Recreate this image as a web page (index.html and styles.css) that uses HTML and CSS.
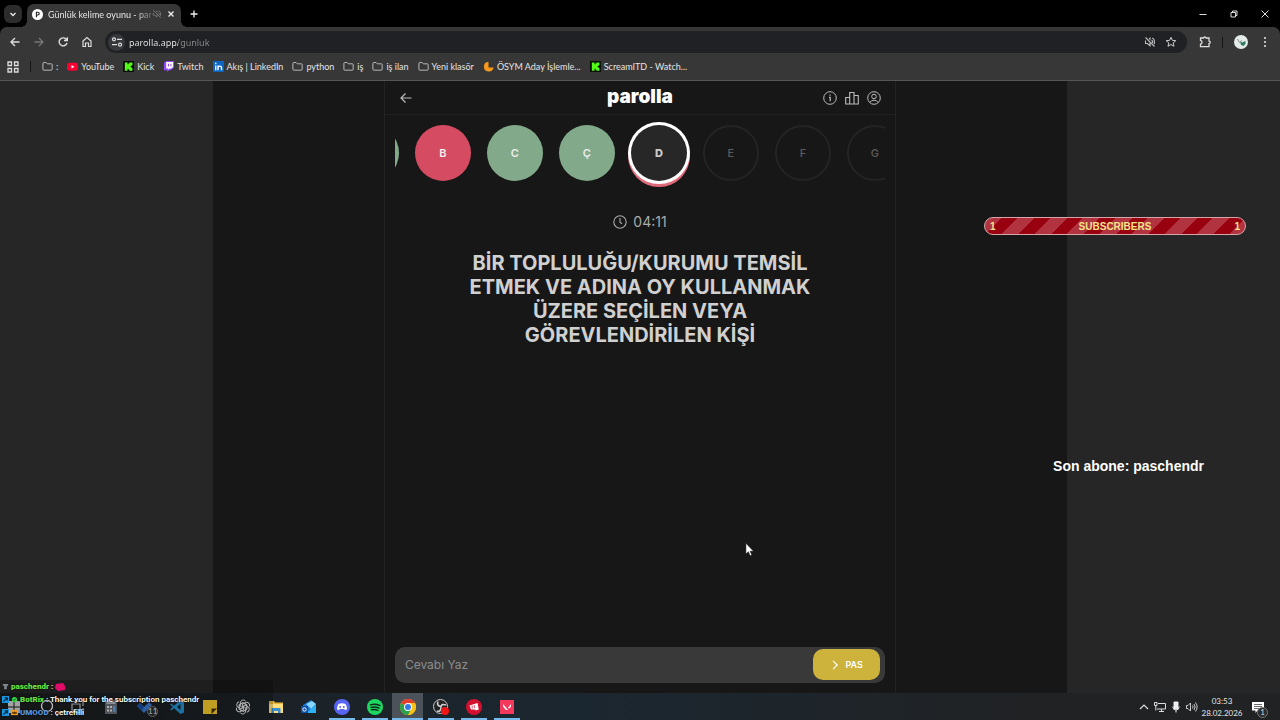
FILE: index.html
```html
<!DOCTYPE html>
<html lang="tr">
<head>
  <meta charset="UTF-8">
  <meta name="viewport" content="width=device-width, initial-scale=1.0">
  <title>Günlük kelime oyunu - parolla</title>
  <link rel="stylesheet" href="styles.css">
</head>
<body>
  <!-- Icons that are used more than once -->
  <svg class="defs" aria-hidden="true">
    <symbol id="folder" viewBox="0 0 12 12"><path d="M1 2.5q0-.8.8-.8h2.7l1.3 1.4h4.5q.8 0 .8.8v5.3q0 .8-.8.8H1.8q-.8 0-.8-.8z" fill="none" stroke="#c4c4c4"/></symbol>
    <symbol id="kick" viewBox="0 0 12 12"><path d="M0 0h12v12H0z" fill="#0b0e0b"/><path d="M2 1.5h3v2h1v-1h1v-1h3.300v3h-1v1h-1v1h1v1h1v3H7v-1H6v-1H5v2H2z" fill="#53fc18"/></symbol>
    <symbol id="muted" viewBox="0 0 16 16"><path d="M2 2l12 12M2 6v4h2.500L8 13V9M8 5V3L6.600 4.200M10 5.500q2 1 1.500 4M11 2.800q4 2 2.600 8" fill="none" stroke="currentColor" stroke-width="1.500"/></symbol>
  </svg>

  <!-- Browser window -->
  <header class="browser">
    <div class="tab-strip">
      <button class="tab-search" aria-label="Sekmelerde ara"><svg viewBox="0 0 10 10"><path d="M2.500 4L5 6.500 7.500 4" fill="none" stroke="#e8e8e8" stroke-width="1.400"/></svg></button>
      <div class="tab">
        <svg class="favicon" viewBox="0 0 12 12"><circle cx="6" cy="6" r="6" fill="#fff"/><path d="M4.800 9V3.500h1.600a1.500 1.500 0 0 1 0 3H4.800" fill="none" stroke="#222" stroke-width="1.200"/></svg>
        <span class="tab-title">Günlük kelime oyunu - par</span>
        <svg class="tab-muted" viewBox="0 0 16 16"><use href="#muted"/></svg>
        <button class="tab-close" aria-label="Kapat"><svg viewBox="0 0 10 10"><path d="M2.500 2.500l5 5m0-5l-5 5" stroke="#eee" stroke-width="1.300"/></svg></button>
      </div>
      <button class="new-tab" aria-label="Yeni sekme"><svg viewBox="0 0 10 10"><path d="M5 1.500v7M1.500 5h7" stroke="#eee" stroke-width="1.300"/></svg></button>
      <div class="window-buttons">
        <button aria-label="Küçült"><svg viewBox="0 0 10 10"><path d="M1.500 5.500h7" stroke="#ddd"/></svg></button>
        <button aria-label="Geri yükle"><svg viewBox="0 0 10 10"><path d="M2 3.500h4.500V8H2zM3.500 3.500V2H8v4.500H6.500" fill="none" stroke="#ddd"/></svg></button>
        <button aria-label="Pencereyi kapat"><svg viewBox="0 0 10 10"><path d="M1.500 1.500l7 7m0-7l-7 7" stroke="#ddd"/></svg></button>
      </div>
    </div>

    <div class="toolbar">
      <button aria-label="Geri"><svg viewBox="0 0 12 12"><path d="M10.500 6h-8M6 2L2 6l4 4" fill="none" stroke="#ddd" stroke-width="1.400"/></svg></button>
      <button aria-label="İleri"><svg viewBox="0 0 12 12"><path d="M1.500 6h8M6 2l4 4-4 4" fill="none" stroke="#777" stroke-width="1.300"/></svg></button>
      <button aria-label="Yenile"><svg viewBox="0 0 12 12"><path d="M10 7a4 4 0 1 1-1-4l1 1M10.300 1.200v3.300H7" fill="none" stroke="#ddd" stroke-width="1.400"/></svg></button>
      <button aria-label="Ana sayfa"><svg viewBox="0 0 12 12"><path d="M2 5l4-3.500L10 5v5.500H7.500V7h-3v3.500H2z" fill="none" stroke="#ddd" stroke-width="1.200"/></svg></button>
      <div class="address">
        <button class="site-info" aria-label="Site bilgileri"><svg viewBox="0 0 12 12"><path d="M6 3.300h5M1 8.700h5" stroke="#ddd" stroke-width="1.200"/><circle cx="3" cy="3.300" r="1.500" fill="none" stroke="#ddd" stroke-width="1.200"/><circle cx="9" cy="8.700" r="1.500" fill="none" stroke="#ddd" stroke-width="1.200"/></svg></button>
        <input class="url" type="text" aria-label="Adres" value="parolla.app/gunluk">
        <button aria-label="Sesi kapalı"><svg viewBox="0 0 16 16"><use href="#muted"/></svg></button>
        <button aria-label="Yer işareti ekle"><svg viewBox="0 0 12 12"><path d="M6 1.300l1.400 3.100 3.400.3-2.600 2.200.8 3.400L6 8.500l-3 1.800.8-3.400L1.200 4.700l3.400-.3z" fill="none" stroke="#ccc"/></svg></button>
      </div>
      <div class="toolbar-end">
        <button aria-label="Uzantılar"><svg viewBox="0 0 12 12"><path d="M1.500 2h2.800q.2-1 1.400-1t1.400 1h2.900v3q1.300.2 1.300 1.300T10 7.600v3H1.500V8.200q1.500-.3 1.500-1.900T1.500 4.400z" fill="none" stroke="#ddd" stroke-width="1.300"/></svg></button>
        <span class="divider"></span>
        <button class="profile" aria-label="Profil"><svg viewBox="0 0 14 14"><circle cx="7" cy="7" r="7" fill="#e4ece9"/><path d="M6 6.500l2 1 3.500-1.500V9L9.500 11 7 10z" fill="#2e7d62"/><path d="M3.500 4l2 3.500L8 5.500" fill="none" stroke="#888"/></svg></button>
        <button aria-label="Menü"><svg viewBox="0 0 12 12"><g fill="#ddd"><circle cx="6" cy="2" r="1.100"/><circle cx="6" cy="6" r="1.100"/><circle cx="6" cy="10" r="1.100"/></g></svg></button>
      </div>
    </div>

    <nav class="bookmarks">
      <button class="apps" aria-label="Uygulamalar"><svg viewBox="0 0 12 12"><path d="M1 1h3.500v3.500H1zM7.500 1H11v3.500H7.500zM1 7.500h3.500V11H1zM7.500 7.500H11V11H7.500z" fill="none" stroke="#ddd" stroke-width="1.300"/></svg></button>
      <span class="divider"></span>
      <a href="#"><svg viewBox="0 0 12 12"><use href="#folder"/></svg>:</a>
      <a href="#"><svg viewBox="0 0 12 12"><rect y="2" width="12" height="8.500" rx="2.500" fill="#f03"/><path d="M4.800 4.300v4l3.400-2z" fill="#fff"/></svg>YouTube</a>
      <a href="#"><svg viewBox="0 0 12 12"><use href="#kick"/></svg>Kick</a>
      <a href="#"><svg viewBox="0 0 12 12"><path d="M3 0h9v7L8.500 10H6.500l-2 2v-2H1V2.500z" fill="#9146ff"/><path d="M3.500 1.200H11v5.300L9.200 8.200H7L5.500 9.500V8.200h-2z" fill="#fff"/><path d="M6 3v3M8.700 3v3" stroke="#9146ff" stroke-width="1.100"/></svg>Twitch</a>
      <a href="#"><svg viewBox="0 0 12 12"><rect width="12" height="12" rx="1" fill="#0a66c2"/><path d="M3 5v5M5.500 10V5m0 2.500Q5.700 5.600 7.500 5.600T9.300 7.500V10M3 2v1.500" fill="none" stroke="#fff" stroke-width="1.500"/></svg>Akış | LinkedIn</a>
      <a href="#"><svg viewBox="0 0 12 12"><use href="#folder"/></svg>python</a>
      <a href="#"><svg viewBox="0 0 12 12"><use href="#folder"/></svg>iş</a>
      <a href="#"><svg viewBox="0 0 12 12"><use href="#folder"/></svg>iş ilan</a>
      <a href="#"><svg viewBox="0 0 12 12"><use href="#folder"/></svg>Yeni klasör</a>
      <a href="#"><svg viewBox="0 0 12 12"><path d="M6 .8A5.300 5.300 0 1 0 11.500 7H6z" fill="#f7981d"/></svg>ÖSYM Aday İşlemle...</a>
      <a href="#"><svg viewBox="0 0 12 12"><use href="#kick"/></svg>ScreamITD - Watch...</a>
    </nav>
  </header>

  <!-- Game page -->
  <main class="page">
    <div class="page-center">
      <section class="game">
        <div class="game-header">
          <a href="#" aria-label="Geri dön"><svg viewBox="0 0 14 14"><path d="M12.500 7H2M6.500 2.500L2 7l4.500 4.500" fill="none" stroke="#bbb" stroke-width="1.200"/></svg></a>
          <h1>parolla</h1>
          <div class="game-actions">
            <button aria-label="Bilgi"><svg viewBox="0 0 14 14"><circle cx="7" cy="7" r="6.300" fill="none" stroke="#bbb"/><path d="M6 6.300h1.200v3.900M7 3.600v1.200" fill="none" stroke="#bbb" stroke-width="1.200"/></svg></button>
            <button aria-label="İstatistikler"><svg viewBox="0 0 14 14"><path d="M.7 6.500h4V13h-4zM4.700 1.500h4.300V13H4.700zM9 4.500h4.300V13H9z" fill="none" stroke="#bbb" stroke-width="1.100"/></svg></button>
            <button aria-label="Hesap"><svg viewBox="0 0 14 14"><g fill="none" stroke="#bbb"><circle cx="7" cy="7" r="6.300"/><circle cx="7" cy="5.500" r="2.300"/><path d="M2.800 11.500Q4 9.200 7 9.200t4.200 2.300"/></g></svg></button>
          </div>
        </div>

        <div class="letters">
          <ul>
            <li class="correct" aria-label="A"></li>
            <li class="wrong">B</li>
            <li class="correct">C</li>
            <li class="correct">Ç</li>
            <li class="current">D</li>
            <li>E</li>
            <li>F</li>
            <li>G</li>
          </ul>
        </div>

        <div class="timer">
          <svg viewBox="0 0 14 14"><circle cx="7" cy="7" r="6.200" fill="none" stroke="#aaa" stroke-width="1.100"/><path d="M7 3v4.200l2 1.500" fill="none" stroke="#aaa" stroke-width="1.100"/></svg>
          <span>04:11</span>
        </div>

        <h2 class="question">BİR TOPLULUĞU/KURUMU TEMSİL ETMEK VE ADINA OY KULLANMAK ÜZERE SEÇİLEN VEYA GÖREVLENDİRİLEN KİŞİ</h2>

        <form class="answer">
          <input type="text" aria-label="Cevap" placeholder="Cevabı Yaz">
          <button type="submit"><svg viewBox="0 0 10 10"><path d="M3 .8L7.200 5 3 9.200" fill="none" stroke="#fff" stroke-width="1.200"/></svg>PAS</button>
        </form>
      </section>
    </div>
  </main>

  <!-- Windows taskbar -->
  <footer class="taskbar">
    <div class="taskbar-apps">
      <button class="start" aria-label="Başlat"><svg viewBox="0 0 16 16"><path d="M2 2h5.500v5.500H2zM8.500 2H14v5.500H8.500zM2 8.500h5.500V14H2zM8.500 8.500H14V14H8.500z" fill="#ccc"/></svg></button>
      <button aria-label="Ara"><svg viewBox="0 0 16 16"><circle cx="10" cy="7" r="5.500" fill="none" stroke="#eee" stroke-width="1.300"/></svg></button>
      <button aria-label="Görev görünümü"><svg viewBox="0 0 16 16"><path d="M2 5h8v6H2zM2 2.500h8M2 13.500h8M13 2v5M13 9v5" fill="none" stroke="#bbb" stroke-width="1.200"/></svg></button>
      <button aria-label="Hesap makinesi"><svg viewBox="0 0 16 16"><path d="M2 1h12v14H2z" fill="#626970"/><path d="M3.500 2.500h9v2.500h-9z" fill="#aebac4"/><path d="M4 7h2v2H4zM7 7h2v2H7zM4 10.500h2v2H4zM7 10.500h2v2H7z" fill="#ddd"/><path d="M10 7h2.500v6H10z" fill="#5c9bd2"/></svg></button>
      <button class="has-badge" aria-label="Yapılacaklar"><svg viewBox="0 0 16 16"><path d="M1 7l3-3 4 4 5-5 3 3-8 8z" fill="#3977cf"/><path d="M1 7l3-3 4 4-2 4z" fill="#1d4f9d"/></svg><span class="badge">11</span></button>
      <button aria-label="VS Code"><svg viewBox="0 0 16 16"><path d="M11.500 1L15 2.500v11L11.500 15 5 9.200 2.200 11.500 1 10.800 3.800 8 1 5.200l1.200-.7L5 6.800zM11.500 5L8 8l3.500 3z" fill="#268ccb" fill-rule="evenodd"/></svg></button>
      <button aria-label="Yapışkan notlar"><svg viewBox="0 0 16 16"><path d="M1 1h14v14H1z" fill="#f0c52c"/><path d="M15 9.500H9.500V15z" fill="#40340b"/></svg></button>
      <button aria-label="ChatGPT"><svg viewBox="0 0 16 16"><g fill="none" stroke="#ddd"><path id="petal" d="M8 8.800L5.300 7.200V4a3 3 0 0 1 5.300-1.900M5.300 5.200L8 3.600l3.500 2"/><use href="#petal" transform="rotate(60 8 8)"/><use href="#petal" transform="rotate(120 8 8)"/><use href="#petal" transform="rotate(180 8 8)"/><use href="#petal" transform="rotate(240 8 8)"/><use href="#petal" transform="rotate(300 8 8)"/></g></svg></button>
      <button aria-label="Dosya Gezgini"><svg viewBox="0 0 16 16"><path d="M1 2h5l1 1.500h8V14H1z" fill="#e9b83b"/><path d="M1 5h14v9H1z" fill="#ffdf7d"/><path d="M3.500 9h9v5h-2.500v-2H6v2H3.500z" fill="#398fd4"/></svg></button>
      <button aria-label="Outlook"><svg viewBox="0 0 16 16"><path d="M2 6l8-5 5 4v9H3z" fill="#1675cf"/><path d="M5 5l6-3 4 3-5 5z" fill="#86d7ff"/><path d="M15 6L5 14h10z" fill="#2eb0f4"/><path d="M0 7h7v7H0z" fill="#0f4fa7"/><circle cx="3.500" cy="10.500" r="1.700" fill="none" stroke="#fff"/></svg></button>
      <button class="open" aria-label="Discord"><svg viewBox="0 0 16 16"><circle cx="8" cy="8" r="8" fill="#5865f2"/><path d="M4.500 5Q8 3.300 11.500 5q1.500 2.500 1.500 5.300l-2 1-.7-1.300H5.700L5 11.300l-2-1Q3 7.500 4.500 5z" fill="#fff"/><circle cx="6.200" cy="8" r="1" fill="#5865f2"/><circle cx="9.800" cy="8" r="1" fill="#5865f2"/></svg></button>
      <button class="open" aria-label="Spotify"><svg viewBox="0 0 16 16"><circle cx="8" cy="8" r="8" fill="#1ed760"/><path d="M3.500 5.800Q8.500 4.300 13 6.600M4 8.400q4.200-1.200 8 .8M4.500 10.800q3.500-.9 6.500.7" fill="none" stroke="#10291a" stroke-width="1.400" stroke-linecap="round"/></svg></button>
      <button class="open active" aria-label="Chrome"><svg viewBox="0 0 16 16"><circle cx="8" cy="8" r="8" fill="#fbc116"/><path d="M8 8L1.070 4A8 8 0 0 1 14.930 4z" fill="#e33b2e"/><path d="M8 8L1.070 4A8 8 0 0 0 8 16l3.500-6z" fill="#2ba24c"/><path d="M8 4h6.930A8 8 0 0 1 8 16l3.500-6z" fill="#fbc116"/><circle cx="8" cy="8" r="4" fill="#fff"/><circle cx="8" cy="8" r="3" fill="#3478e5"/></svg></button>
      <button class="open" aria-label="OBS"><svg viewBox="0 0 16 16"><circle cx="7.500" cy="7.500" r="7" fill="#242427" stroke="#ccc"/><path d="M5 2.500Q3.500 7 8 7.500M13 6q-4-1.500-5 1.500M4 12q4 1.500 4-4.500" fill="none" stroke="#ccc" stroke-width="1.600"/><circle cx="12" cy="12" r="4" fill="#f01414"/></svg></button>
      <button class="open" aria-label="Riot Client"><svg viewBox="0 0 16 16"><circle cx="8" cy="8" r="8" fill="#d3112f"/><path d="M3.500 6.500L11.500 4l1.300 6.500-3.300 1-.3-1H5z" fill="#fff"/><path d="M6 6.500l.4 3M8.200 6l.4 3" stroke="#d3112f" stroke-width=".7"/></svg></button>
      <button class="open" aria-label="Valorant"><svg viewBox="0 0 16 16"><path d="M1 1h14v14H1z" fill="#f5395c"/><path d="M4 5v2.500l3 3.500h2zM12 5v2.500L10.600 9.200H8.800z" fill="#fff"/></svg></button>
    </div>

    <div class="tray">
      <button aria-label="Gizli simgeler"><svg viewBox="0 0 12 12"><path d="M2 8l4-4 4 4" fill="none" stroke="#ddd" stroke-width="1.200"/></svg></button>
      <button aria-label="Ağ"><svg viewBox="0 0 12 12"><path d="M4 2.500h7.500V8H3M5 10.500h5M7.500 8v2.500M.5 1.500h2.500v3H.5zM1.800 4.500v5" fill="none" stroke="#ddd"/></svg></button>
      <button aria-label="Mikrofon"><svg viewBox="0 0 12 12"><rect x="3.500" y=".5" width="5" height="7.500" rx="1" fill="#eee"/><path d="M2.800 5.500q0 3.500 3.200 3.500t3.200-3.500M6 8.500v3" fill="none" stroke="#eee"/></svg></button>
      <button aria-label="Ses"><svg viewBox="0 0 12 12"><path d="M.5 4.500H2L4.500 2v8L2 7.500H.5zM6.500 4.500q1.200 1.500 0 3M8 3q2.200 3 0 6M9.500 1.500q3.300 4.500 0 9" fill="none" stroke="#ddd" stroke-width=".9"/></svg></button>
      <div class="clock"><span>03:53</span><span>28.02.2026</span></div>
      <button class="has-badge" aria-label="Bildirimler"><svg viewBox="0 0 12 12"><path d="M0 1h12v8.500H5.500L3.500 12V9.500H0z" fill="#fff"/><path d="M2 3.500h8M2 5.500h8M2 7.500h5" stroke="#444" stroke-width=".8"/></svg><span class="badge">1</span></button>
    </div>
  </footer>

  <!-- Stream overlays -->
  <div class="subscriber-goal"><span>1</span><span>SUBSCRIBERS</span><span>1</span></div>
  <p class="last-subscriber">Son abone: paschendr</p>
  <div class="chat">
    <p><svg viewBox="0 0 8 8"><path d="M1 1h6v2H5.500v4h-3V3H1z" fill="#7d8990"/></svg><b class="name-green">paschendr</b> :<svg class="emote" viewBox="0 0 10 8"><path d="M1 1l7-1 2 3v4L3 8 0 5z" fill="#df0d69"/></svg></p>
    <p><svg viewBox="0 0 8 8"><path d="M0 0h8v8H0z" fill="#1696dd"/><path d="M1.500 6.500l4-4M3 2h3v3" fill="none" stroke="#07233a" stroke-width="1.300"/></svg><svg viewBox="0 0 8 8"><circle cx="4" cy="4" r="3" fill="#31d843"/><path d="M2.500 4l1 1 2-2" fill="none" stroke="#0b3511"/></svg><b class="name-green">BotRix</b> : Thank you for the subscription paschendr</p>
    <p><svg viewBox="0 0 8 8"><path d="M0 0h8v8H0z" fill="#1696dd"/><path d="M1.500 6.500l4-4M3 2h3v3" fill="none" stroke="#07233a" stroke-width="1.300"/></svg><svg viewBox="0 0 8 8"><path d="M0 1h8v6H0z" fill="#f29b22"/><path d="M1.500 5.500V3l1.500 1 1-1.500L5 4l1.500-1v2.500z" fill="#4b2a05"/></svg><b class="name-blue">UMOOD</b> : çetrefilli</p>
  </div>
  <svg class="cursor" viewBox="0 0 10 15"><path d="M1 0v12l2.800-2.600L5.600 14l2-.9-1.900-4.300h3.800z" fill="#fff" stroke="#111" stroke-width=".6"/></svg>
</body>
</html>
```
FILE: styles.css
```css
* {
  box-sizing: border-box;
}

body {
  margin: 0;
  height: 100vh;
  display: flex;
  flex-direction: column;
  position: relative;
  overflow: hidden;
  background-color: #262626;
  color: #e4e4e4;
  font-family: Lato, "Noto Sans", sans-serif;
  font-size: 9px;
}

button {
  display: flex;
  align-items: center;
  justify-content: center;
  padding: 0;
  border: none;
  background: none;
  color: inherit;
  font: inherit;
  cursor: pointer;
}

a {
  color: inherit;
  text-decoration: none;
}

svg {
  display: block;
  flex: none;
  width: 12px;
  height: 12px;
}

.defs {
  position: absolute;
  width: 0;
  height: 0;
}

.divider {
  width: 1px;
  height: 11px;
  background-color: #161616;
}

/* Browser window */
.browser {
  background-color: #000;
  border-bottom: 1px solid #565656;
}

.tab-strip {
  display: flex;
  align-items: center;
  height: 27px;
  padding-left: 4px;
}

.tab-search {
  width: 18px;
  height: 18px;
  border-radius: 6px;
  background-color: #2c2c2c;
}

.tab-strip button svg {
  width: 10px;
  height: 10px;
}

.tab {
  position: relative;
  display: flex;
  align-items: center;
  align-self: flex-end;
  width: 154px;
  height: 23px;
  margin-left: 5px;
  padding: 0 5px 3px;
  border-radius: 7px 7px 0 0;
  background-color: #373737;
}

/* Curved feet of the tab */
.tab::before,
.tab::after {
  content: "";
  position: absolute;
  bottom: 0;
  width: 6px;
  height: 6px;
}

.tab::before {
  left: -6px;
  background: radial-gradient(circle at 0 0, transparent 6px, #373737 6px);
}

.tab::after {
  right: -6px;
  background: radial-gradient(circle at 100% 0, transparent 6px, #373737 6px);
}

.favicon {
  width: 11px;
  height: 11px;
}

.tab-title {
  flex: 1;
  min-width: 0;
  margin-left: 5px;
  white-space: nowrap;
  -webkit-mask-image: linear-gradient(to right, #000 85%, rgba(0, 0, 0, 0.3));
  mask-image: linear-gradient(to right, #000 85%, rgba(0, 0, 0, 0.3));
}

.tab-muted {
  width: 10px;
  height: 10px;
  margin: 0 4px 0 1px;
  color: #777;
}

.new-tab {
  margin-left: 8px;
}

.window-buttons {
  display: flex;
  margin-left: auto;
}

.window-buttons button {
  width: 31px;
  height: 27px;
}

.toolbar {
  display: flex;
  align-items: center;
  gap: 12px;
  height: 30px;
  padding: 0 9px;
  border-radius: 7px 7px 0 0;
  background-color: #373737;
}

.toolbar-end {
  display: flex;
  align-items: center;
  gap: 11px;
}

.address {
  flex: 1;
  display: flex;
  align-items: center;
  gap: 9px;
  height: 22px;
  padding: 0 10px 0 3px;
  border-radius: 11px;
  background-color: #202124;
  color: #bbb;
}

.site-info {
  width: 17px;
  height: 17px;
  border-radius: 50%;
  background-color: #37383b;
}

/* The path is dimmer than the host name */
.url {
  flex: 1;
  min-width: 0;
  padding: 0;
  border: none;
  outline: none;
  background: linear-gradient(to right, #eee 49px, #8b8b8b 49px);
  -webkit-background-clip: text;
  background-clip: text;
  color: transparent;
  font-family: "Noto Sans", sans-serif;
  font-size: 9px;
}

.site-info + .url {
  margin-left: -5px;
}

.profile svg {
  width: 14px;
  height: 14px;
}

.bookmarks {
  display: flex;
  align-items: center;
  gap: 9px;
  height: 23px;
  padding: 0 7px 4px;
  background-color: #373737;
  white-space: nowrap;
}

.bookmarks .divider {
  margin: 0 2px;
}

.bookmarks a {
  display: flex;
  align-items: center;
  gap: 3px;
}

.bookmarks a svg {
  width: 11px;
  height: 11px;
}

/* Game page */
.page {
  flex: 1;
  display: flex;
  justify-content: center;
  min-height: 0;
  font-family: Inter, Roboto, sans-serif;
}

.page-center {
  display: flex;
  justify-content: center;
  width: 66.7%;
  background-color: #171717;
}

.game {
  display: flex;
  flex-direction: column;
  width: 60%;
  border: 1px solid #222;
  border-width: 0 1px;
}

.game-header {
  display: grid;
  grid-template-columns: 1fr auto 1fr;
  align-items: center;
  height: 34px;
  padding: 0 14px;
  border-bottom: 1px solid #222;
}

.game-header svg,
.timer svg {
  width: 14px;
  height: 14px;
}

.game-header h1 {
  margin: 0;
  padding-bottom: 2px;
  color: #fff;
  font-size: 19px;
  font-weight: 900;
  line-height: 24px;
}

.game-actions {
  display: flex;
  justify-content: flex-end;
  gap: 8px;
}

.letters {
  margin: 0 10px;
  padding: 10px 0 16px;
  overflow: hidden;
}

/* The list is scrolled so that the current letter is in view */
.letters ul {
  display: flex;
  gap: 16px;
  margin: 0 0 0 -52px;
  padding: 0;
  list-style: none;
}

.letters li {
  display: flex;
  flex: none;
  align-items: center;
  justify-content: center;
  width: 56px;
  height: 56px;
  border: 2px solid #242424;
  border-radius: 50%;
  color: #5c5c5c;
  font-size: 11px;
  font-weight: 500;
}

.letters .correct,
.letters .wrong {
  border: none;
  color: #eee;
  font-weight: 600;
}

.letters .correct {
  background-color: #82aa8a;
}

.letters .wrong {
  background-color: #d54b61;
}

.letters .current {
  border: none;
  background-color: #272727;
  box-shadow: 0 0 0 3px #fff, 0 3px 0 3px #e06a7a;
  color: #ccc;
  font-weight: 800;
}

.timer {
  display: flex;
  align-items: center;
  justify-content: center;
  gap: 6px;
  margin-top: 16px;
  color: #aaa;
  font-size: 14px;
  line-height: 17px;
}

.question {
  max-width: 370px;
  margin: 21px auto 0;
  color: #d0d0d0;
  font-size: 20px;
  font-weight: 700;
  line-height: 24px;
  text-align: center;
}

.answer {
  display: flex;
  align-items: center;
  height: 36px;
  margin: auto 10px 10px;
  padding: 0 5px 1px 10px;
  border-radius: 10px;
  background-color: #393939;
}

.answer input {
  flex: 1;
  min-width: 0;
  padding: 0;
  border: none;
  outline: none;
  background: none;
  color: #ddd;
  font: inherit;
  font-size: 12px;
}

.answer input::placeholder {
  color: #8c8c8c;
}

.answer button {
  gap: 5px;
  width: 67px;
  height: 31px;
  border-radius: 10px;
  background-color: #cdb23c;
  color: #fff;
  font-size: 9px;
  font-weight: 600;
}

.answer button svg {
  width: 10px;
  height: 10px;
}

/* Windows taskbar */
.taskbar {
  display: flex;
  justify-content: space-between;
  height: 27px;
  background: linear-gradient(to right, #1b1c1d, #1b2730 45%, #202224 80%);
}

.taskbar-apps {
  display: flex;
  gap: 2px;
}

.taskbar-apps button {
  width: 31px;
  height: 27px;
}

.taskbar-apps .start {
  width: 27px;
}

.taskbar-apps svg {
  width: 16px;
  height: 16px;
}

.taskbar-apps .open {
  background: linear-gradient(#76b9ed, #76b9ed) center bottom / 26px 2px no-repeat;
}

.taskbar-apps .active {
  background-color: #4b5259;
  background-size: 31px 2px;
}

.has-badge {
  position: relative;
}

.badge {
  position: absolute;
  right: 3px;
  bottom: 3px;
  width: 11px;
  height: 11px;
  border: 1px solid #777;
  border-radius: 50%;
  background-color: #292b2d;
  color: #ddd;
  font-size: 8px;
  line-height: 9px;
  text-align: center;
}

.taskbar-apps .badge {
  right: 1px;
}

.tray {
  display: flex;
  align-items: center;
  gap: 4px;
  padding-right: 12px;
}

.clock {
  display: flex;
  flex-direction: column;
  align-items: center;
  width: 36px;
  margin: 0 4px 0 2px;
  font-size: 8px;
  line-height: 12px;
}

.tray .has-badge {
  width: 20px;
  height: 22px;
}

.tray .badge {
  right: 0;
  bottom: 0;
}

/* Stream overlays */
.subscriber-goal {
  position: absolute;
  top: 217px;
  right: 34px;
  display: flex;
  align-items: center;
  justify-content: space-between;
  width: 262px;
  height: 18px;
  padding: 0 5px;
  border: 1px solid #d6a5a9;
  border-radius: 9px;
  background: repeating-linear-gradient(135deg, #b23340 0 12px, #98000f 12px 23px);
  color: #f5e488;
  font: bold 10px "Liberation Sans", Arial, sans-serif;
}

.last-subscriber {
  position: absolute;
  top: 457px;
  right: 76px;
  margin: 0;
  color: #fff;
  font: bold 14px/18px "Liberation Sans", Arial, sans-serif;
}

.chat {
  position: absolute;
  bottom: 0;
  left: 0;
  width: 273px;
  padding: 0 0 1px 2px;
  background-color: rgba(0, 0, 0, 0.2);
  color: #fff;
  font-family: Roboto, sans-serif;
  font-size: 8px;
  font-weight: 600;
  line-height: 13px;
}

.chat p {
  display: flex;
  align-items: center;
  gap: 2px;
  margin: 0;
  white-space: nowrap;
  text-shadow: 0 0 2px #000;
}

.chat svg {
  width: 7px;
  height: 7px;
}

.chat .emote {
  width: 10px;
  height: 8px;
}

.name-green {
  color: #68e33e;
}

.name-blue {
  color: #5b94dc;
}

.cursor {
  position: absolute;
  top: 543px;
  left: 745px;
  width: 9px;
  height: 14px;
}
```
